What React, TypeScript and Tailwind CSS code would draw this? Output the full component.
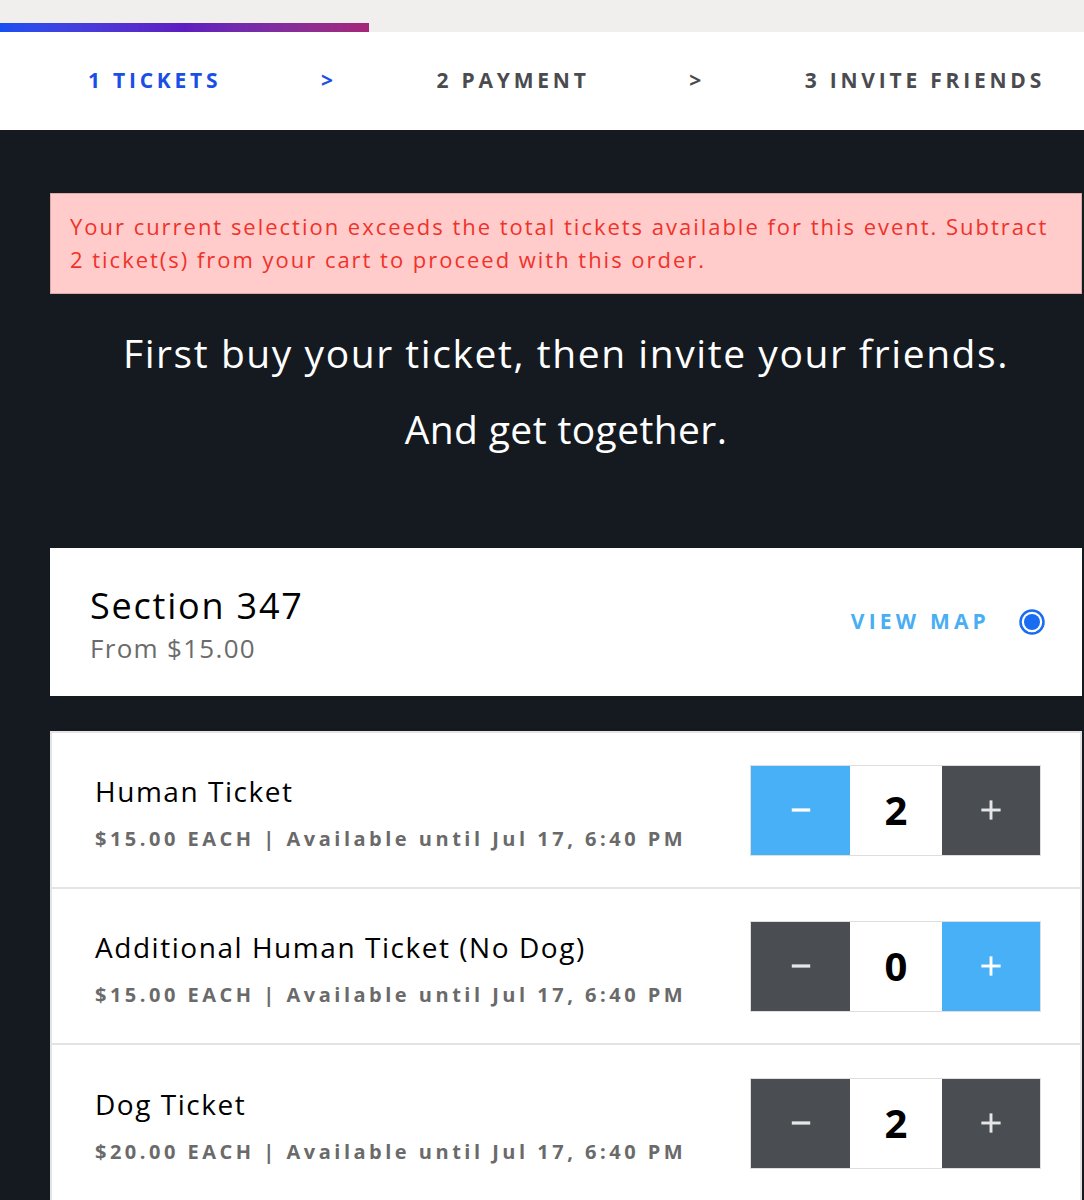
import { Minus, Plus } from "lucide-react";

interface TicketRowProps {
  name: string
  price: string
  count: number
  minusActive?: boolean
  plusActive?: boolean
  last?: boolean
}

function Stepper({ count, minusActive, plusActive }: { count: number; minusActive?: boolean; plusActive?: boolean }) {
  return (
    <div className="flex h-[91px] w-[291px] border border-[#dedede] bg-white">
      <button className={`flex w-[99px] items-center justify-center text-[#e6e6e6] ${minusActive ? "bg-[#48b0f6] text-white" : "bg-[#4a4d52]"}`}>
        <Minus size={26} strokeWidth={3} strokeLinecap="square" />
      </button>
      <div className="flex flex-1 items-center justify-center text-[40px] font-bold text-black">{count}</div>
      <button className={`flex w-[98px] items-center justify-center text-[#e6e6e6] ${plusActive ? "bg-[#48b0f6] text-white" : "bg-[#4a4d52]"}`}>
        <Plus size={28} strokeWidth={2.5} strokeLinecap="square" />
      </button>
    </div>
  )
}

function TicketRow({ name, price, count, minusActive, plusActive, last }: TicketRowProps) {
  return (
    <div className={`flex h-[156px] items-center justify-between pl-[43px] pr-[39px] ${last ? "" : "border-b-2 border-[#e4e4e4]"}`}>
      <div className="flex flex-col pt-[4px]">
        <span className="text-[28px] leading-[38px] tracking-[0.055em] text-black">{name}</span>
        <span className="mt-[16px] text-[20px] leading-[26px] font-bold tracking-[0.175em] text-[#6a6a6a]">
          {price} EACH | Available until Jul 17, 6:40 PM
        </span>
      </div>
      <Stepper count={count} minusActive={minusActive} plusActive={plusActive} />
    </div>
  )
}

export default function App() {
  return (
    <div className="min-h-[1200px] w-[1084px] bg-[#151a21] font-['Open_Sans',sans-serif]">
      <div className="h-[32px] bg-[#f0efee] pt-[23px]">
        <div className="h-[9px] w-[369px] bg-gradient-to-r from-[#1450f2] via-[#5e1cc0] to-[#a6267a]" />
      </div>

      <nav className="flex h-[98px] items-center justify-between bg-white pl-[88px] pr-[39px] text-[21px] font-bold tracking-[0.18em] text-[#4a4b4f]">
        <span className="text-[#1a4ee6]">1 TICKETS</span>
        <span className="text-[#1a4ee6]">&gt;</span>
        <span>2 PAYMENT</span>
        <span>&gt;</span>
        <span>3 INVITE FRIENDS</span>
      </nav>

      <main className="pl-[50px] pr-[2px] pt-[63px] pb-[2px]">
        <div className="h-[101px] border border-[#d9a9a8] bg-[#ffcccb] px-[19px] pt-[16px] text-[22px] leading-[33px] tracking-[0.09em] text-[#f0322a]">
          Your current selection exceeds the total tickets available for this event. Subtract 2 ticket(s) from your cart to proceed with this order.
        </div>

        <h1 className="mt-[31px] text-center text-[39px] leading-[56px] tracking-[0.04em] text-white">
          First buy your ticket, then invite your friends.
        </h1>
        <p className="mt-[20px] text-center text-[39px] leading-[56px] tracking-[0.01em] text-white">And get together.</p>

        <section className="mt-[91px] flex h-[148px] items-center justify-between bg-white pl-[40px] pr-[36px]">
          <div className="flex flex-col pt-[4px]">
            <span className="text-[36px] leading-[46px] tracking-[0.05em] text-black">Section 347</span>
            <span className="mt-[2px] text-[26px] leading-[34px] tracking-[0.05em] text-[#6b6b6b]">From $15.00</span>
          </div>
          <div className="flex items-center gap-[28px]">
            <span className="text-[21px] font-bold tracking-[0.2em] text-[#4aaef2]">VIEW MAP</span>
            <svg width="28" height="28" viewBox="0 0 28 28">
              <circle cx="14" cy="14" r="11.5" fill="none" stroke="#1a6cf0" strokeWidth="2.5" />
              <circle cx="14" cy="14" r="8" fill="#1a6cf0" />
            </svg>
          </div>
        </section>

        <section className="mt-[35px] border-2 border-[#e4e4e4] border-b-0 bg-white">
          <TicketRow name="Human Ticket" price="$15.00" count={2} minusActive />
          <TicketRow name="Additional Human Ticket (No Dog)" price="$15.00" count={0} plusActive />
          <TicketRow name="Dog Ticket" price="$20.00" count={2} last />
        </section>
      </main>
    </div>
  )
}
